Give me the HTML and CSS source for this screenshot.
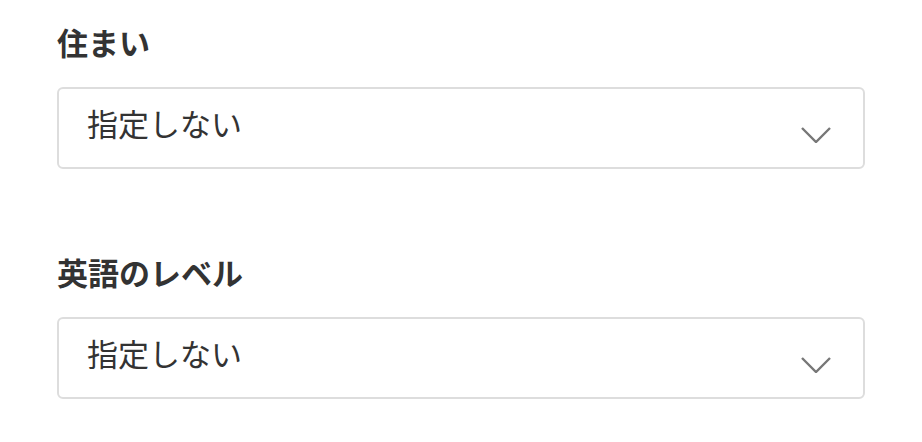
FILE: index.html
```html
<!DOCTYPE html>
<html lang="ja">
<head>
	<meta charset="utf-8">
	<title>検索条件</title>
	<link rel="stylesheet" href="styles.css">
</head>
<body>
	<div class="form">
		<div class="field">
			<div class="fieldLabel">住まい</div>
			<div class="selectBox">
				<span class="selectValue">指定しない</span>
				<svg class="chevron" width="30" height="16" viewBox="0 0 30 16">
					<polyline points="1,1 15,15 29,1" fill="none" stroke="#777777" stroke-width="2.4"/>
				</svg>
			</div>
		</div>
		<div class="field">
			<div class="fieldLabel">英語のレベル</div>
			<div class="selectBox">
				<span class="selectValue">指定しない</span>
				<svg class="chevron" width="30" height="16" viewBox="0 0 30 16">
					<polyline points="1,1 15,15 29,1" fill="none" stroke="#777777" stroke-width="2.4"/>
				</svg>
			</div>
		</div>
	</div>
</body>
</html>
```

FILE: styles.css
```css
body {
	margin: 0;
	background: #ffffff;
	font-family: "Noto Sans CJK JP", "Noto Sans", sans-serif;
	color: #333333;
}

.form {
	padding: 21px 57px 0 57px;
	width: 808px;
}

.field {
	margin-bottom: 82px;
}

.field:last-child {
	margin-bottom: 0;
}

.fieldLabel {
	font-size: 31px;
	font-weight: 700;
	line-height: 42px;
	margin-bottom: 24px;
}

.selectBox {
	box-sizing: border-box;
	height: 82px;
	border: 2px solid #dddddd;
	border-radius: 6px;
	display: flex;
	align-items: center;
	justify-content: space-between;
	padding: 0 32px 0 28px;
}

.selectValue {
	font-size: 31px;
	line-height: 40px;
	margin-bottom: 10px;
}

.chevron {
	display: block;
	margin-top: 13px;
}
```
